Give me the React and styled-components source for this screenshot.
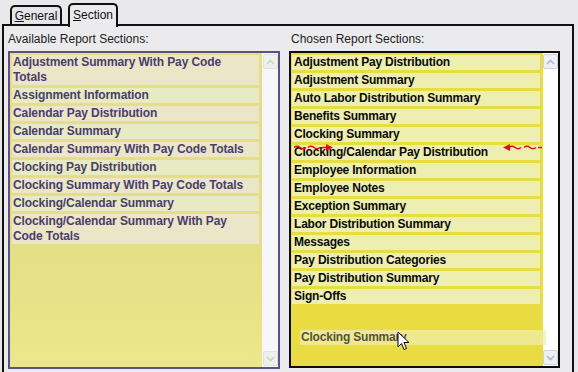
import React from 'react';
import styled, { createGlobalStyle } from 'styled-components';

const GlobalStyle = createGlobalStyle`
  body {
    margin: 0;
    background: #e9e9eb;
    font-family: 'Liberation Sans', Arial, sans-serif;
  }
`;

const Window = styled.div`
  width: 578px;
  height: 372px;
  overflow: hidden;
  background: #e9e9eb;
  padding-top: 3px;
  box-sizing: border-box;
`;

const TabStrip = styled.div`
  display: flex;
  align-items: flex-end;
  gap: 6px;
  padding-left: 10px;
  height: 21px;
  position: relative;
  z-index: 2;
`;

const Tab = styled.div`
  box-sizing: border-box;
  border: 2px solid #111;
  border-bottom: none;
  border-radius: 5px 5px 0 0;
  font-size: 12px;
  color: #111;
  display: flex;
  align-items: center;
  justify-content: center;
  width: ${(p) => (p.$active ? '50px' : '52px')};
  height: ${(p) => (p.$active ? '24px' : '19px')};
  margin-bottom: ${(p) => (p.$active ? '-3px' : '0')};
  padding-bottom: ${(p) => (p.$active ? '3px' : '0')};
  background: ${(p) => (p.$active ? '#ebebed' : '#e6e6e8')};

  u {
    text-decoration: underline;
  }
`;

const Panel = styled.div`
  box-sizing: border-box;
  margin-left: 2px;
  width: 572px;
  height: 360px;
  border: 2px solid #111;
  border-bottom: none;
  background: #ebebed;
  padding: 6px 0 0 4px;
  display: grid;
  grid-template-columns: 272px 271px;
  column-gap: 9px;
`;

const Column = styled.div`
  display: flex;
  flex-direction: column;
`;

const Label = styled.div`
  font-size: 12px;
  line-height: 14px;
  color: #222;
  height: 14px;
  margin-left: ${(p) => p.$indent || 0}px;
`;

const Box = styled.div`
  position: relative;
  box-sizing: border-box;
  margin-top: 5px;
  height: ${(p) => p.$h}px;
  border: 2px solid ${(p) => (p.$chosen ? '#0c0c0c' : '#5d5087')};
  display: flex;
  background: ${(p) =>
    p.$chosen
      ? '#e8dc42'
      : 'linear-gradient(180deg, #e6dd8a 0%, #e4de84 60%, #ebe78a 100%)'};
`;

const List = styled.div`
  flex: 1;
  padding: ${(p) => (p.$chosen ? '2px 3px 0 1px' : '2px 3px 0 2px')};
  display: flex;
  flex-direction: column;
  gap: 3px;
`;

const Item = styled.div`
  font-size: 12px;
  font-weight: bold;
  line-height: 15px;
  letter-spacing: ${(p) => (p.$chosen ? '-0.2px' : '-0.1px')};
  padding: ${(p) => (p.$chosen ? '0 2px' : '0 1px')};
  color: ${(p) => (p.$chosen ? '#0a0a0a' : '#4a3d6c')};
  background: ${(p) => (p.$chosen ? '#eeeeb0' : p.$alt ? '#e6ebc4' : '#ebe6c8')};
  white-space: normal;
`;

const Scroll = styled.div`
  width: ${(p) => p.$w}px;
  background: ${(p) => (p.$chosen ? '#ffffff' : '#f7f6fa')};
  display: flex;
  flex-direction: column;
  justify-content: space-between;
  align-items: center;
  padding: 1px 0 1px;
`;

const ScrollButton = styled.div`
  width: 15px;
  height: 15px;
  box-sizing: border-box;
  border: 1px solid ${(p) => (p.$faded ? '#dfe3d8' : '#cdd2dc')};
  border-radius: 2px;
  background: ${(p) => (p.$faded ? '#eef1ea' : '#eef0f3')};
  display: grid;
  place-items: center;
`;

const Ghost = styled.div`
  position: absolute;
  left: 9px;
  top: 277px;
  width: 246px;
  height: 15px;
  background: rgba(240, 238, 170, 0.75);
  font-size: 12px;
  font-weight: bold;
  line-height: 15px;
  letter-spacing: -0.2px;
  color: #55533e;
  padding-left: 1px;
  box-sizing: border-box;
`;

const Overlay = styled.svg`
  position: absolute;
  left: ${(p) => p.$x}px;
  top: ${(p) => p.$y}px;
  pointer-events: none;
`;

const available = [
  'Adjustment Summary With Pay Code Totals',
  'Assignment Information',
  'Calendar Pay Distribution',
  'Calendar Summary',
  'Calendar Summary With Pay Code Totals',
  'Clocking Pay Distribution',
  'Clocking Summary With Pay Code Totals',
  'Clocking/Calendar Summary',
  'Clocking/Calendar Summary With Pay Code Totals',
];

const chosen = [
  'Adjustment Pay Distribution',
  'Adjustment Summary',
  'Auto Labor Distribution Summary',
  'Benefits Summary',
  'Clocking Summary',
  'Clocking/Calendar Pay Distribution',
  'Employee Information',
  'Employee Notes',
  'Exception Summary',
  'Labor Distribution Summary',
  'Messages',
  'Pay Distribution Categories',
  'Pay Distribution Summary',
  'Sign-Offs',
];

const Chevron = ({ up, color }) => (
  <svg width="9" height="6" viewBox="0 0 9 6">
    <path
      d={up ? 'M1 5 L4.5 1.5 L8 5' : 'M1 1 L4.5 4.5 L8 1'}
      fill="none"
      stroke={color}
      strokeWidth="1.6"
    />
  </svg>
);

const WavyArrow = ({ x, y, left }) => (
  <Overlay $x={x} $y={y} width="40" height="9" viewBox="0 0 40 9">
    {left ? (
      <>
        <path
          d="M6 4.5 Q9 2 12 4.5 T18 4.5 M21 4.5 Q24 2 27 4.5 T33 4.5 M35 4.5 L39 4.5"
          fill="none"
          stroke="#e01010"
          strokeWidth="1.6"
        />
        <path d="M0 4.5 L7 1 L7 8 Z" fill="#e01010" />
      </>
    ) : (
      <>
        <path
          d="M0 4.5 Q3 2 6 4.5 T12 4.5 M14 4.5 Q17 2 20 4.5 T26 4.5 M28 4.5 L33 4.5"
          fill="none"
          stroke="#e01010"
          strokeWidth="1.6"
        />
        <path d="M39 4.5 L32 1 L32 8 Z" fill="#e01010" />
      </>
    )}
  </Overlay>
);

const App = () => {
  return (
    <Window>
      <GlobalStyle />
      <TabStrip>
        <Tab>
          <span>
            <u>G</u>eneral
          </span>
        </Tab>
        <Tab $active>
          <span>
            <u>S</u>ection
          </span>
        </Tab>
      </TabStrip>
      <Panel>
        <Column>
          <Label>Available Report Sections:</Label>
          <Box $h={318}>
            <List>
              {available.map((name, i) => (
                <Item key={name} $alt={i % 2 === 1}>
                  {name}
                </Item>
              ))}
            </List>
            <Scroll $w={16}>
              <ScrollButton $faded>
                <Chevron up color="#c9d6c4" />
              </ScrollButton>
              <ScrollButton $faded>
                <Chevron color="#c9d6c4" />
              </ScrollButton>
            </Scroll>
          </Box>
        </Column>
        <Column>
          <Label $indent={2}>Chosen Report Sections:</Label>
          <Box $h={317} $chosen>
            <List $chosen>
              {chosen.map((name) => (
                <Item key={name} $chosen>
                  {name}
                </Item>
              ))}
            </List>
            <Scroll $w={15} $chosen>
              <ScrollButton>
                <Chevron up color="#a9bccb" />
              </ScrollButton>
              <ScrollButton>
                <Chevron color="#a9bccb" />
              </ScrollButton>
            </Scroll>
            <WavyArrow x={3} y={90} />
            <WavyArrow x={212} y={90} left />
            <Ghost>Clocking Summary</Ghost>
            <Overlay $x={106} $y={278} width="13" height="20" viewBox="0 0 13 20">
              <path
                d="M1 1 L1 16 L4.5 12.5 L7 18.5 L9.5 17.5 L7 11.5 L12 11.5 Z"
                fill="#fff"
                stroke="#000"
                strokeWidth="1"
                strokeLinejoin="miter"
              />
            </Overlay>
          </Box>
        </Column>
      </Panel>
    </Window>
  );
};

export default App;
